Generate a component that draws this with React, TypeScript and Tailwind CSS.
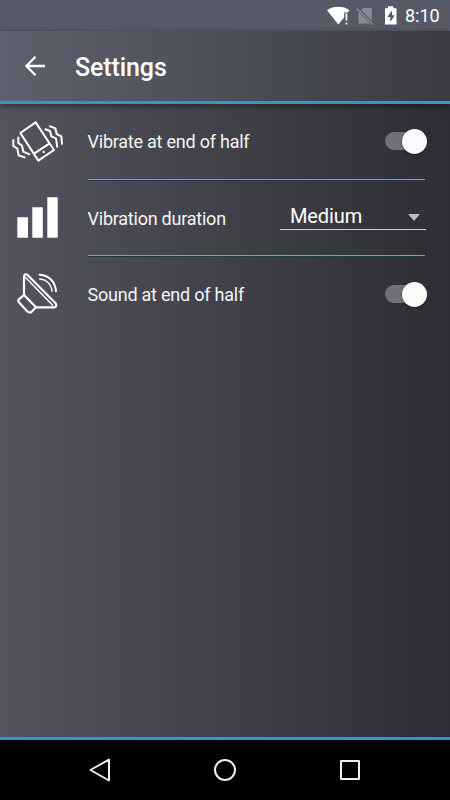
import { useState } from "react";
import type { ReactNode } from "react";

function StatusBar() {
  return (
    <div className="flex h-[31px] shrink-0 items-center justify-end bg-[#565a66] pr-[10px] text-white">
      <svg className="h-[31px] w-[82px]" viewBox="0 0 82 31">
        <path d="M9 10.2C15 5.7 25.5 5.7 31.5 10.2L29.5 12.6H26.2V17.5L20.3 24.5Z" fill="#fff" />
        <path d="M27.6 13.5H29.3V20.5H27.6ZM27.6 22.4H29.3V24.4H27.6Z" fill="#fff" />
        <path d="M45.5 8H53.8V21L43 9.8ZM40.5 12L52 23.6H40.5Z" fill="#888b94" />
        <path d="M39 8.5L54.8 24.5" stroke="#888b94" strokeWidth="1.4" />
        <path d="M67 8.2H70V6.3H75.3V8.2H78.5V24.5H67Z" fill="#fff" />
        <path d="M74 10.5L69.3 17H72.3V22L76.8 15.3H74Z" fill="#565a66" />
      </svg>
      <span className="ml-[5px] w-[35px] text-[18px] leading-none whitespace-nowrap">8:10</span>
    </div>
  );
}

function Toolbar() {
  return (
    <header className="relative z-10 flex h-[73px] shrink-0 items-center border-b-[3px] border-[#3197d3] bg-linear-to-r/srgb from-[#5e616d] to-[#3a3b43] pl-[25px] text-white shadow-[0_2px_6px_rgba(0,0,0,0.45)]">
      <svg className="h-5 w-5" viewBox="0 0 20 20" fill="none" stroke="#fff" strokeWidth="2.3">
        <path d="M20 10H2M10.5 .8L1.4 10L10.5 19.2" />
      </svg>
      <h1 className="ml-[30px] pt-[3px] text-[25px] font-medium leading-none tracking-[-0.1px]">Settings</h1>
    </header>
  );
}

function PhoneIcon() {
  return (
    <svg className="h-[65px] w-[75px]" viewBox="0 0 225 195" fill="none" stroke="#fff" strokeWidth="6" strokeLinejoin="round">
      <path d="M61 69L107 37L162 120L115 152ZM102 131L149 100" />
      <path d="M40 88V108L52 116L56 136L76 143M55 80V99L66 107L70 125L90 134" />
      <path d="M134 57L150 63L154 79L168 85L172 113M148 48L166 55L170 72L184 79L186 104" />
      <circle cx="131" cy="126" r="3.5" fill="#fff" stroke="none" />
    </svg>
  );
}

function BarsIcon() {
  return (
    <svg className="h-[65px] w-[75px]" viewBox="0 0 75 65" fill="#fff">
      <path d="M17.3 32.3H28V52.7H17.3ZM32.3 22.3H42.8V52.7H32.3ZM47.3 12.3H57.7V52.7H47.3Z" />
    </svg>
  );
}

function SpeakerIcon() {
  return (
    <svg className="h-[65px] w-[75px]" viewBox="0 0 225 195" fill="none" stroke="#fff" strokeWidth="6.5" strokeLinejoin="round" strokeLinecap="round">
      <path d="M72 105V50Q73 40 82 44L166 129Q173 138 164 142H108" />
      <path d="M72 105L56 119Q53 122 56 126L83 155Q90 160 95 155L108 142Z" />
      <path d="M76 52L158 136" strokeWidth="4.5" />
      <path d="M119 44C148 46 166 66 168 94" strokeWidth="6" />
      <path d="M119 57C140 59 154 73 156 94" strokeWidth="4" />
    </svg>
  );
}

function Toggle({ label }: { label: string }) {
  const [on, setOn] = useState(true);
  return (
    <button
      type="button"
      role="switch"
      aria-label={label}
      aria-checked={on}
      onClick={() => setOn(!on)}
      className={`flex h-[18px] w-[42px] items-center rounded-full bg-[#727179] ${on ? "justify-end" : "justify-start"}`}
    >
      <span className="h-[25px] w-[25px] shrink-0 rounded-full bg-[#fafafa] shadow-[0_1px_2px_rgba(0,0,0,0.5)]" />
    </button>
  );
}

function SettingRow({ icon, label, first, last, children }: { icon: ReactNode; label: string; first?: boolean; last?: boolean; children: ReactNode }) {
  return (
    <div className="flex h-[76px]">
      <div className="w-[87px]">{icon}</div>
      <div className="flex w-[338px] flex-col">
        <div className="flex flex-1">
          <span className={`flex-1 pl-[0.5px] text-[18px] leading-[21px] tracking-[-0.23px] text-[#f5f5f5] ${first ? "pt-[27px]" : "pt-[28px]"}`}>{label}</span>
          <div className="mr-[-2px]">{children}</div>
        </div>
        {!last && <div className="ml-[0.5px] h-px bg-[#ee7f42] shadow-[0_1px_0_#1c3a48]" />}
      </div>
    </div>
  );
}

export default function App() {
  return (
    <div className="flex h-[800px] w-[450px] flex-col overflow-hidden bg-black font-[Roboto,sans-serif]">
      <StatusBar />
      <Toolbar />
      <main className="flex-1 border-b-[3px] border-[#3197d3] bg-linear-to-r/srgb from-[#53545f] to-[#2e2d35]">
        <SettingRow icon={<div className="pt-[6px]"><PhoneIcon /></div>} label="Vibrate at end of half" first>
          <div className="pt-[28px]"><Toggle label="Vibrate at end of half" /></div>
        </SettingRow>
        <SettingRow icon={<div className="pt-[5px]"><BarsIcon /></div>} label="Vibration duration">
          <div className="mt-[22px] mr-[1px] flex h-[28px] w-[146px] items-center justify-between border-b border-[#d0d0d3] pr-[6px] pl-[10px] text-[20px] leading-none tracking-[-0.1px] text-white">
            <span>Medium</span>
            <svg className="mt-[3px] h-[7px] w-[12px]" viewBox="0 0 12 7" fill="#bdbdc0">
              <path d="M0 0H12L6 7Z" />
            </svg>
          </div>
        </SettingRow>
        <SettingRow icon={<div className="pt-[4px]"><SpeakerIcon /></div>} label="Sound at end of half" last>
          <div className="pt-[29px]"><Toggle label="Sound at end of half" /></div>
        </SettingRow>
      </main>
      <nav className="flex h-[60px] shrink-0 items-center justify-between px-[88px]">
        <svg className="h-6 w-6" viewBox="0 0 24 24" fill="none" stroke="#eee" strokeWidth="2" strokeLinejoin="round">
          <path d="M2.5 12L21 1.5V22.5Z" />
        </svg>
        <svg className="h-6 w-6" viewBox="0 0 24 24" fill="none" stroke="#eee" strokeWidth="2">
          <circle cx="12" cy="12" r="10" />
        </svg>
        <svg className="h-6 w-6" viewBox="0 0 24 24" fill="none" stroke="#eee" strokeWidth="2" strokeLinejoin="round">
          <path d="M3 3H21V21H3Z" />
        </svg>
      </nav>
    </div>
  );
}
